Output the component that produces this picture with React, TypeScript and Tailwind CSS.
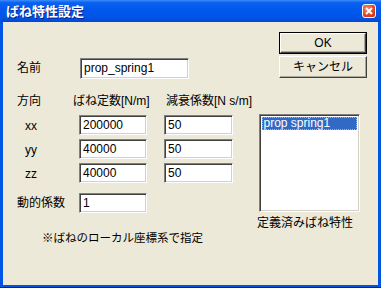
import React from 'react';

const font = { fontFamily: '"Liberation Sans", "Noto Sans CJK JP", sans-serif' };

function Field({ value, className = '' }: { value: string; className?: string }) {
	return (
		<div
			className={`h-[20px] bg-white border border-t-[#808080] border-l-[#808080] border-b-white border-r-white shadow-[inset_1px_1px_0_#404040,inset_-1px_-1px_0_#D4D0C8] pl-[3px] text-[12px] leading-[18px] text-black ${className}`}
		>
			{value}
		</div>
	);
}

function Button({ label, isDefault = false }: { label: string; isDefault?: boolean }) {
	return (
		<div className={`w-[88px] h-[22px] ${isDefault ? 'border border-black' : ''}`}>
			<div className="h-full flex items-center justify-center bg-[#ECE9D8] border border-t-white border-l-white border-b-[#404040] border-r-[#404040] shadow-[inset_-1px_-1px_0_#ACA899] text-[12px] text-black">
				{label}
			</div>
		</div>
	);
}

const rows = [
	{ dir: 'xx', k: '200000', c: '50' },
	{ dir: 'yy', k: '40000', c: '50' },
	{ dir: 'zz', k: '40000', c: '50' },
];

export default function App() {
	return (
		<div className="w-[381px] h-[288px] flex flex-col bg-[#0055E5] border-b border-b-[#001E9C]" style={font}>
			{/* title bar */}
			<div className="h-[22px] flex items-center px-[6px] bg-[linear-gradient(to_bottom,#3D8DFA_0%,#0A61F0_12%,#0058EE_45%,#0054E4_80%,#0049D3_100%)]">
				<span className="text-white font-bold text-[13px] leading-none [text-shadow:1px_1px_0_#0A1E8C]">
					ばね特性設定
				</span>
				<div className="ml-auto mr-[-1px] w-[14px] h-[14px] rounded-[3px] border border-white bg-[radial-gradient(circle_at_35%_30%,#F08B6A,#E0421C_60%,#C8300C)] flex items-center justify-center">
					<svg width="8" height="8" viewBox="0 0 8 8">
						<path d="M1 1 L7 7 M7 1 L1 7" stroke="white" strokeWidth="2" />
					</svg>
				</div>
			</div>

			{/* client */}
			<div className="mx-[3px] mb-[2px] flex-1 bg-[#ECE9D8] flex flex-col text-[12px] text-black">
				<div className="h-[60px] flex">
					<div className="pl-[14px] pt-[32px] flex items-center">
						<span className="w-[63px]">名前</span>
						<Field value="prop_spring1" className="w-[109px] h-[21px]" />
					</div>
					<div className="ml-auto mr-[11px] mt-[10px] flex flex-col gap-[2px]">
						<Button label="OK" isDefault />
						<Button label="キャンセル" />
					</div>
				</div>

				<div className="flex">
					<div className="pl-[14px] w-[240px] shrink-0">
						<div className="mt-[11px] h-[16px] flex leading-[16px] whitespace-nowrap">
							<span className="w-[56px] shrink-0">方向</span>
							<span className="w-[93px] shrink-0">ばね定数[N/m]</span>
							<span className="shrink-0">減衰係数[N s/m]</span>
						</div>
						<div className="mt-[6px] flex flex-col gap-[4px]">
							{rows.map((r) => (
								<div key={r.dir} className="flex items-center">
									<span className="w-[62px] pl-[8px] pt-[2px]">{r.dir}</span>
									<Field value={r.k} className="w-[68px]" />
									<Field value={r.c} className="ml-[17px] w-[69px]" />
								</div>
							))}
						</div>
						<div className="mt-[10px] flex items-center">
							<span className="w-[62px]">動的係数</span>
							<Field value="1" className="w-[68px]" />
						</div>
						<div className="mt-[17px] pl-[25px] leading-[16px] whitespace-nowrap text-[11.5px]">※ばねのローカル座標系で指定</div>
					</div>

					<div className="ml-[14px] pt-[32px] flex flex-col items-center">
						<div className="w-[101px] h-[98px] bg-white border border-t-[#808080] border-l-[#808080] border-b-white border-r-white shadow-[inset_1px_1px_0_#404040,inset_-1px_-1px_0_#D4D0C8] p-[2px]">
							<div className="h-[13px] bg-[#316AC5] outline outline-1 outline-dotted outline-[#F0B040] -outline-offset-1 text-white pl-[2px] leading-[12px] overflow-hidden">
								prop spring1
							</div>
						</div>
						<div className="mt-[3px] mr-[8px] leading-[16px] whitespace-nowrap">定義済みばね特性</div>
					</div>
				</div>
			</div>
		</div>
	);
}
